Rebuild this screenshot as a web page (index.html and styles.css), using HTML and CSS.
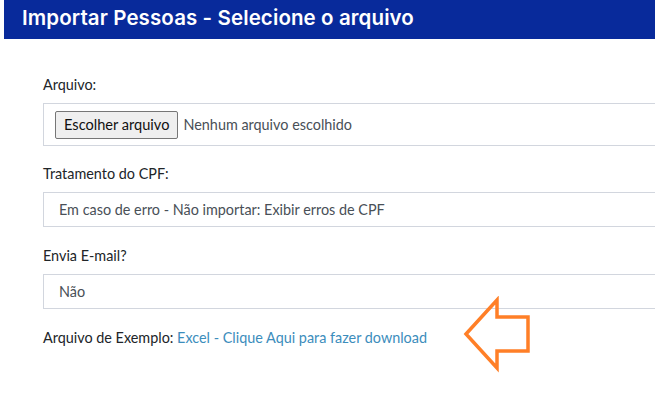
FILE: index.html
```html
<!DOCTYPE html>
<html lang="pt">
<head>
<meta charset="utf-8">
<link rel="stylesheet" href="styles.css">
</head>
<body>
<header class="topbar">
  <h1 class="title">Importar Pessoas - Selecione o arquivo</h1>
</header>
<main class="form">
  <div class="group">
    <label class="label">Arquivo:</label>
    <div class="box box-file">
      <span class="file-btn">Escolher arquivo</span>
      <span class="file-name">Nenhum arquivo escolhido</span>
    </div>
  </div>
  <div class="group">
    <label class="label">Tratamento do CPF:</label>
    <div class="box box-select">Em caso de erro - Não importar: Exibir erros de CPF</div>
  </div>
  <div class="group">
    <label class="label">Envia E-mail?</label>
    <div class="box box-select">Não</div>
  </div>
  <p class="example">Arquivo de Exemplo: <a class="link" href="#">Excel - Clique Aqui para fazer download</a></p>
</main>
<svg class="arrow" width="80" height="84" viewBox="0 0 80 84">
  <polygon points="3,38 34,4 34,21 65,21 65,55 34,55 34,72" fill="none" stroke="#ff7f27" stroke-width="3.5" stroke-linejoin="miter"/>
</svg>
</body>
</html>
```
FILE: styles.css
```css
html, body {
  margin: 0;
  padding: 0;
  background: #fff;
  overflow: hidden;
  width: 655px;
  height: 400px;
}
body {
  position: relative;
  font-family: "Lato", "Liberation Sans", sans-serif;
}
.topbar {
  margin-left: 4px;
  height: 39px;
  background: #082a9b;
  display: flex;
  align-items: center;
  padding-left: 18px;
}
.title {
  margin: 0;
  color: #fff;
  font-family: "Inter", "Lato", sans-serif;
  font-weight: 600;
  font-size: 20.5px;
  letter-spacing: 0.1px;
  line-height: 1;
  padding-bottom: 2px;
}
.form {
  padding: 34px 0 0 43px;
}
.group {
  display: flex;
  flex-direction: column;
  margin-bottom: 17px;
}
.group:first-child {
  margin-bottom: 16px;
}
.label {
  font-size: 14.4px;
  line-height: 24px;
  color: #212529;
  margin-bottom: 6px;
}
.box {
  border: 1px solid #d2d6de;
  border-right: none;
  box-sizing: border-box;
  font-size: 14.4px;
  color: #495057;
  display: flex;
  align-items: center;
}
.box-file {
  height: 43px;
  padding-left: 11px;
}
.file-btn {
  height: 28px;
  box-sizing: border-box;
  border: 1px solid #767676;
  border-radius: 2px;
  background: #efefef;
  color: #111;
  padding: 0 8px;
  display: flex;
  align-items: center;
  font-size: 14.6px;
}
.file-name {
  margin-left: 5px;
  color: #495057;
}
.box-select {
  height: 35px;
  padding-left: 15px;
}
.example {
  margin: 0;
  font-size: 14.4px;
  line-height: 24px;
  color: #212529;
}
.link {
  color: #3c8dbc;
  text-decoration: none;
}
.arrow {
  position: absolute;
  left: 463px;
  top: 296px;
}
```
